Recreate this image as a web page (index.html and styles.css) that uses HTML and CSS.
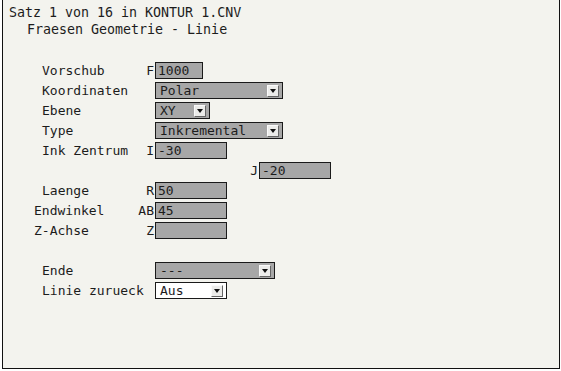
FILE: index.html
```html
<!DOCTYPE html>
<html>
<head>
<meta charset="utf-8">
<link rel="stylesheet" href="styles.css">
</head>
<body>
<div class="panel">
  <div class="head">
    <div class="line">Satz 1 von 16 in KONTUR 1.CNV</div>
    <div class="line sub">Fraesen Geometrie - Linie</div>
  </div>
  <div class="form">
    <div class="row"><span class="lbl ind">Vorschub</span><span class="let">F</span><span class="box w48">1000</span></div>
    <div class="row"><span class="lbl ind">Koordinaten</span><span class="let"></span><span class="sel w128"><span class="val">Polar</span><span class="btn"><span class="tri"></span></span></span></div>
    <div class="row"><span class="lbl ind">Ebene</span><span class="let"></span><span class="sel w55"><span class="val">XY</span><span class="btn"><span class="tri"></span></span></span></div>
    <div class="row"><span class="lbl ind">Type</span><span class="let"></span><span class="sel w128"><span class="val">Inkremental</span><span class="btn"><span class="tri"></span></span></span></div>
    <div class="row"><span class="lbl ind">Ink Zentrum</span><span class="let">I</span><span class="box w72">-30</span></div>
    <div class="row row-j"><span class="lbl"></span><span class="let">J</span><span class="box w72">-20</span></div>
    <div class="row"><span class="lbl ind">Laenge</span><span class="let">R</span><span class="box w72">50</span></div>
    <div class="row"><span class="lbl">Endwinkel</span><span class="let">AB</span><span class="box w72">45</span></div>
    <div class="row"><span class="lbl">Z-Achse</span><span class="let">Z</span><span class="box w72"></span></div>
    <div class="row"></div>
    <div class="row"><span class="lbl ind">Ende</span><span class="let"></span><span class="sel w120"><span class="val">---</span><span class="btn"><span class="tri"></span></span></span></div>
    <div class="row"><span class="lbl ind">Linie zurueck</span><span class="let"></span><span class="sel w72 white"><span class="val">Aus</span><span class="btn"><span class="tri"></span></span></span></div>
  </div>
</div>
</body>
</html>
```

FILE: styles.css
```css
html, body {
  margin: 0;
  padding: 0;
  background: #ffffff;
}
body {
  font-family: "DejaVu Sans Mono", monospace;
  font-size: 13px;
  color: #1c1c1c;
}
.panel {
  margin-left: 2px;
  width: 556px;
  height: 368px;
  background: #f3f3ee;
  border: 1px solid #111;
  border-top: none;
}
.head {
  padding: 4px 0 0 6px;
  font-size: 13.3px;
}
.line {
  height: 17px;
  line-height: 17px;
  white-space: pre;
}
.line.sub {
  padding-left: 18px;
}
.form {
  margin-top: 24px;
  padding-left: 31px;
}
.row {
  display: grid;
  grid-template-columns: 100px 21px auto;
  height: 17px;
  margin-bottom: 3px;
  line-height: 17px;
  white-space: pre;
}
.row-j {
  grid-template-columns: 204px 21px auto;
}
.lbl.ind {
  padding-left: 8px;
}
.let {
  text-align: right;
  padding-right: 1px;
}
.box, .sel {
  box-sizing: border-box;
  height: 17px;
  border: 1px solid #1a1a1a;
  background: #a7a7a7;
  line-height: 15px;
  padding-left: 2px;
  display: flex;
  align-items: center;
}
.sel {
  justify-content: space-between;
  padding-right: 3px;
  padding-left: 4px;
}
.sel.white {
  background: #ffffff;
}
.val {
  line-height: 15px;
}
.btn {
  box-sizing: border-box;
  width: 12px;
  height: 12px;
  background: #ececea;
  border: 1px solid;
  border-color: #fafafa #666 #666 #fafafa;
  display: flex;
  align-items: center;
  justify-content: center;
}
.tri {
  width: 0;
  height: 0;
  border-left: 3.5px solid transparent;
  border-right: 3.5px solid transparent;
  border-top: 4px solid #111;
}
.w48 { width: 48px; }
.w55 { width: 55px; }
.w72 { width: 72px; }
.w120 { width: 120px; }
.w128 { width: 128px; }
```
